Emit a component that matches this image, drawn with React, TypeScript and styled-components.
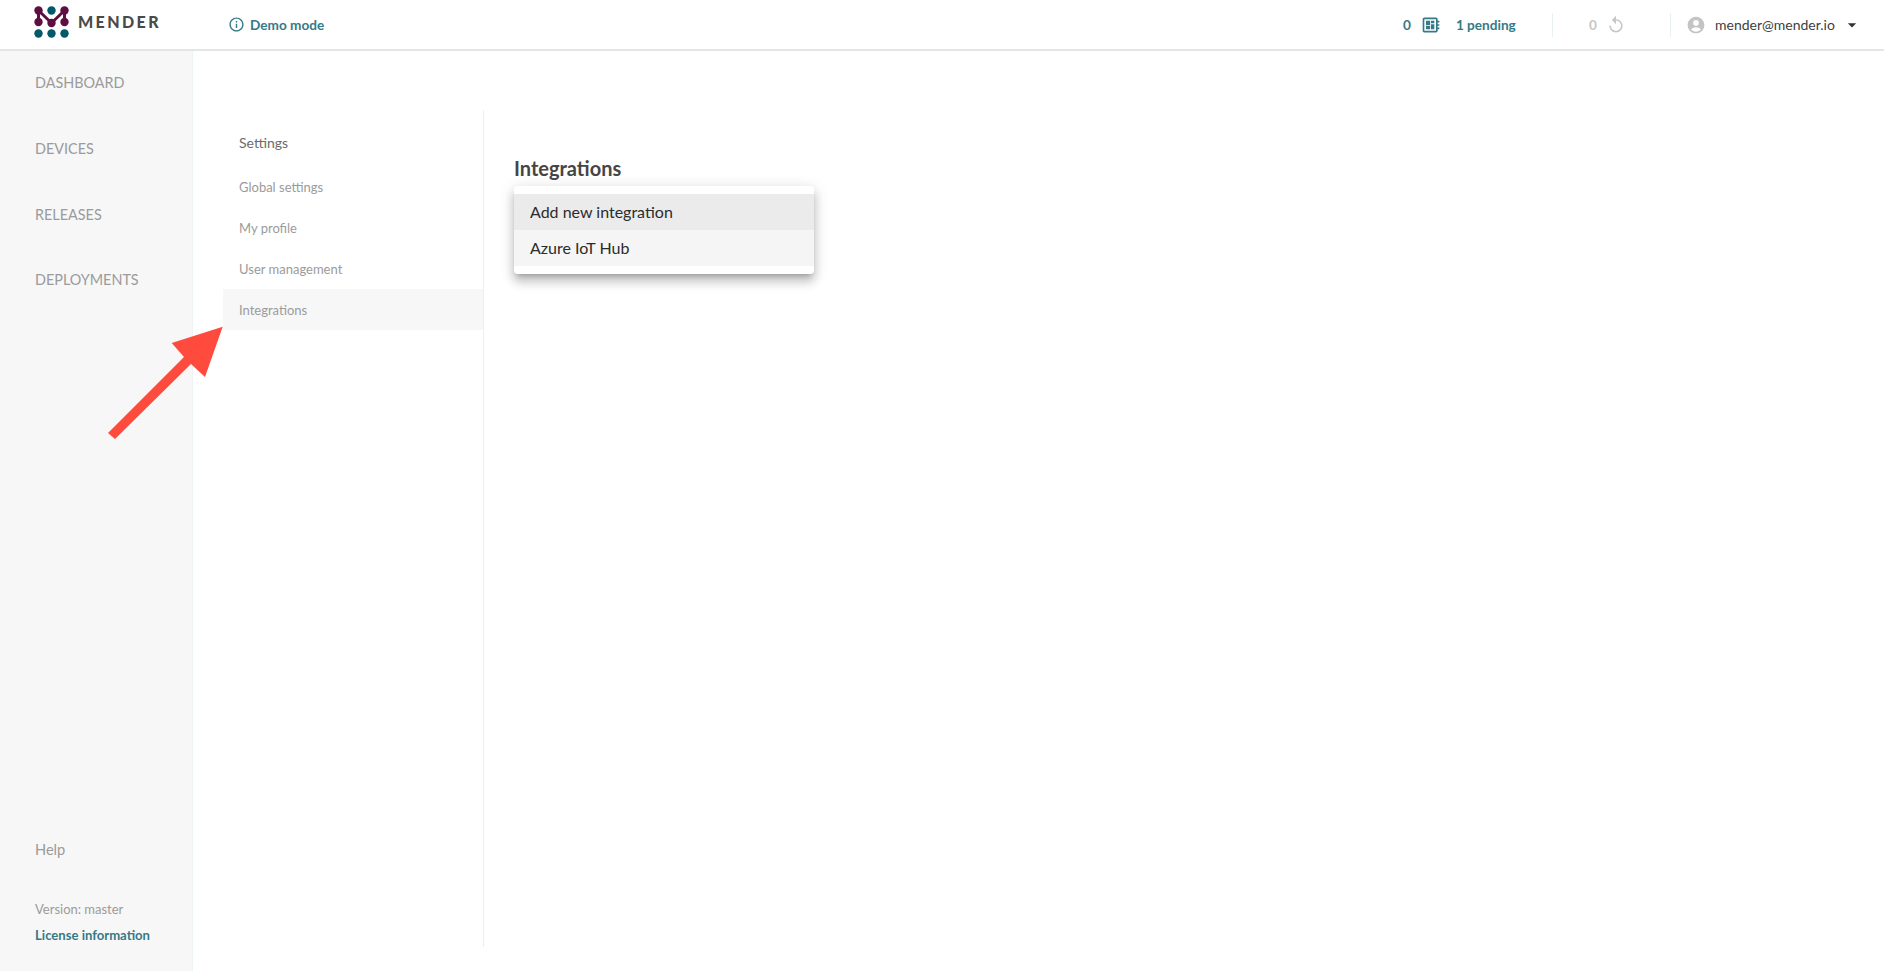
import styled, { createGlobalStyle } from 'styled-components';
import {
  MdAccountCircle,
  MdArrowDropDown,
  MdInfoOutline,
  MdOutlineDeveloperBoard,
  MdReplay,
} from 'react-icons/md';

const GlobalStyle = createGlobalStyle`
  html, body {
    margin: 0;
    padding: 0;
    background: #fff;
    font-family: Lato, "Noto Sans", sans-serif;
    color: #404041;
  }
  * { box-sizing: border-box; }
`;

const Page = styled.div`
  position: relative;
  width: 1884px;
  height: 971px;
  display: flex;
  flex-direction: column;
  overflow: hidden;
`;

const Header = styled.header`
  height: 51px;
  flex: none;
  display: flex;
  align-items: center;
  border-bottom: 2px solid #e4e6e6;
  padding-left: 34px;
  font-size: 13.6px;
`;

const LogoBox = styled.div`
  display: flex;
  align-items: center;
  gap: 9px;
  width: 194px;
  padding-bottom: 6px;
`;

const LogoWord = styled.span`
  font-size: 16px;
  font-weight: 900;
  letter-spacing: 2.4px;
  color: #4a4a4a;
`;

const TealLink = styled.span`
  display: inline-flex;
  align-items: center;
  color: #347a87;
  font-weight: 700;
  font-size: 13.1px;
`;

const DemoMode = styled(TealLink)`
  gap: 5px;
  font-size: 13.6px;
  svg {
    font-size: 17px;
  }
`;

const HeaderRight = styled.div`
  margin-left: auto;
  display: flex;
  align-items: center;
  height: 100%;
`;

const Counts = styled.div`
  display: flex;
  align-items: center;
  width: 149px;
  color: #347a87;
  font-weight: 700;
  svg {
    font-size: 20px;
    margin: 0 15px 0 10px;
  }
`;

const Rollbacks = styled.div`
  height: 24px;
  width: 119px;
  border-left: 1px solid #e6f2f1;
  border-right: 1px solid #e6f2f1;
  display: flex;
  align-items: center;
  padding-left: 36px;
  color: #c7c7c7;
  font-weight: 700;
  svg {
    font-size: 20px;
    margin-left: 9px;
  }
`;

const UserMenu = styled.div`
  display: flex;
  align-items: center;
  width: 213px;
  padding-left: 15px;
  color: #404041;
  font-size: 14px;
`;

const AccountIcon = styled(MdAccountCircle)`
  font-size: 20px;
  color: #c4c4c4;
  margin-right: 9px;
`;

const CaretIcon = styled(MdArrowDropDown)`
  font-size: 20px;
  color: #333;
  margin-left: 7px;
`;

const Body = styled.div`
  flex: 1;
  display: flex;
  min-height: 0;
`;

const LeftNav = styled.nav`
  width: 193px;
  flex: none;
  background: #f7f7f7;
  border-right: 1px solid #eef3f3;
  display: flex;
  flex-direction: column;
  padding: 0 0 28px 35px;
`;

const NavList = styled.div`
  display: flex;
  flex-direction: column;
  margin-top: -1px;
`;

const NavItem = styled.div`
  height: 65.7px;
  display: flex;
  align-items: center;
  font-size: 14.4px;
  color: #9b9b9b;
`;

const NavFooter = styled.div`
  margin-top: auto;
  display: flex;
  flex-direction: column;
`;

const HelpLink = styled.div`
  font-size: 14.6px;
  color: #9b9b9b;
  margin-bottom: 43px;
`;

const Version = styled.div`
  font-size: 13px;
  color: #9b9b9b;
  margin-bottom: 10px;
`;

const Main = styled.main`
  flex: 1;
  display: flex;
  padding: 59px 0 24px 30px;
`;

const SettingsColumn = styled.aside`
  width: 261px;
  flex: none;
  border-right: 1px solid #e6f2f1;
  display: flex;
  flex-direction: column;
  padding-top: 12px;
`;

const SettingsTitle = styled.div`
  height: 41px;
  padding-left: 16px;
  display: flex;
  align-items: center;
  font-size: 14px;
  color: #6b6b6b;
  margin-bottom: 3px;
`;

const SettingsItem = styled.div<{ $active?: boolean }>`
  height: 41px;
  padding-left: 16px;
  display: flex;
  align-items: center;
  font-size: 13px;
  color: #9b9b9b;
  background: ${(p) => (p.$active ? '#f7f7f7' : 'transparent')};
`;

const Content = styled.section`
  padding: 46px 0 0 30px;
`;

const Title = styled.h2`
  margin: 0 0 6px;
  font-size: 20px;
  line-height: 24px;
  font-weight: 700;
  color: #454545;
`;

const Dropdown = styled.ul`
  list-style: none;
  margin: 0;
  padding: 8px 0;
  width: 300px;
  background: #fff;
  border-radius: 4px;
  box-shadow: 0 5px 5px -3px rgba(0, 0, 0, 0.2), 0 8px 10px 1px rgba(0, 0, 0, 0.14),
    0 3px 14px 2px rgba(0, 0, 0, 0.12);
`;

const DropdownItem = styled.li<{ $selected?: boolean }>`
  height: 36px;
  display: flex;
  align-items: center;
  padding: 0 0 2px 16px;
  font-size: 16px;
  color: #2b2b2b;
  background: ${(p) => (p.$selected ? '#ebebeb' : '#f5f5f5')};
`;

// annotation over the page, not part of the flow
const Arrow = styled.svg`
  position: absolute;
  left: 100px;
  top: 320px;
`;

function Logo() {
  const plum = '#5d0f43';
  const teal = '#015969';
  return (
    <svg width="35" height="32" viewBox="0 0 35 32">
      <circle cx="17.5" cy="4.5" r="4.2" fill={teal} />
      <circle cx="4.5" cy="27.5" r="4.2" fill={teal} />
      <circle cx="17.5" cy="27.5" r="4.2" fill={teal} />
      <circle cx="30.5" cy="27.5" r="4.2" fill={teal} />
      <circle cx="4.5" cy="4.5" r="4.2" fill={plum} />
      <circle cx="30.5" cy="4.5" r="4.2" fill={plum} />
      <circle cx="4.5" cy="16" r="4.2" fill={plum} />
      <circle cx="30.5" cy="16" r="4.2" fill={plum} />
      <circle cx="17.5" cy="17" r="4.2" fill={plum} />
      <path
        d="M4.5 4.5 L17.5 17 L30.5 4.5 M4.5 4.5 V16 M30.5 4.5 V16"
        fill="none"
        stroke={plum}
        strokeWidth="3"
      />
    </svg>
  );
}

export default function App() {
  return (
    <Page>
      <GlobalStyle />
      <Header>
        <LogoBox>
          <Logo />
          <LogoWord>MENDER</LogoWord>
        </LogoBox>
        <DemoMode>
          <MdInfoOutline />
          Demo mode
        </DemoMode>
        <HeaderRight>
          <Counts>
            0
            <MdOutlineDeveloperBoard />
            1 pending
          </Counts>
          <Rollbacks>
            0
            <MdReplay />
          </Rollbacks>
          <UserMenu>
            <AccountIcon />
            mender@mender.io
            <CaretIcon />
          </UserMenu>
        </HeaderRight>
      </Header>
      <Body>
        <LeftNav>
          <NavList>
            <NavItem>DASHBOARD</NavItem>
            <NavItem>DEVICES</NavItem>
            <NavItem>RELEASES</NavItem>
            <NavItem>DEPLOYMENTS</NavItem>
          </NavList>
          <NavFooter>
            <HelpLink>Help</HelpLink>
            <Version>Version: master</Version>
            <TealLink>License information</TealLink>
          </NavFooter>
        </LeftNav>
        <Main>
          <SettingsColumn>
            <SettingsTitle>Settings</SettingsTitle>
            <SettingsItem>Global settings</SettingsItem>
            <SettingsItem>My profile</SettingsItem>
            <SettingsItem>User management</SettingsItem>
            <SettingsItem $active>Integrations</SettingsItem>
          </SettingsColumn>
          <Content>
            <Title>Integrations</Title>
            <Dropdown>
              <DropdownItem $selected>Add new integration</DropdownItem>
              <DropdownItem>Azure IoT Hub</DropdownItem>
            </Dropdown>
          </Content>
        </Main>
      </Body>
      <Arrow width="130" height="125" viewBox="0 0 130 125">
        <polygon
          points="122.7,6.7 105,57 91,44 15,119 8,113 84,37 71.7,23"
          fill="#ff4b3e"
        />
      </Arrow>
    </Page>
  );
}
